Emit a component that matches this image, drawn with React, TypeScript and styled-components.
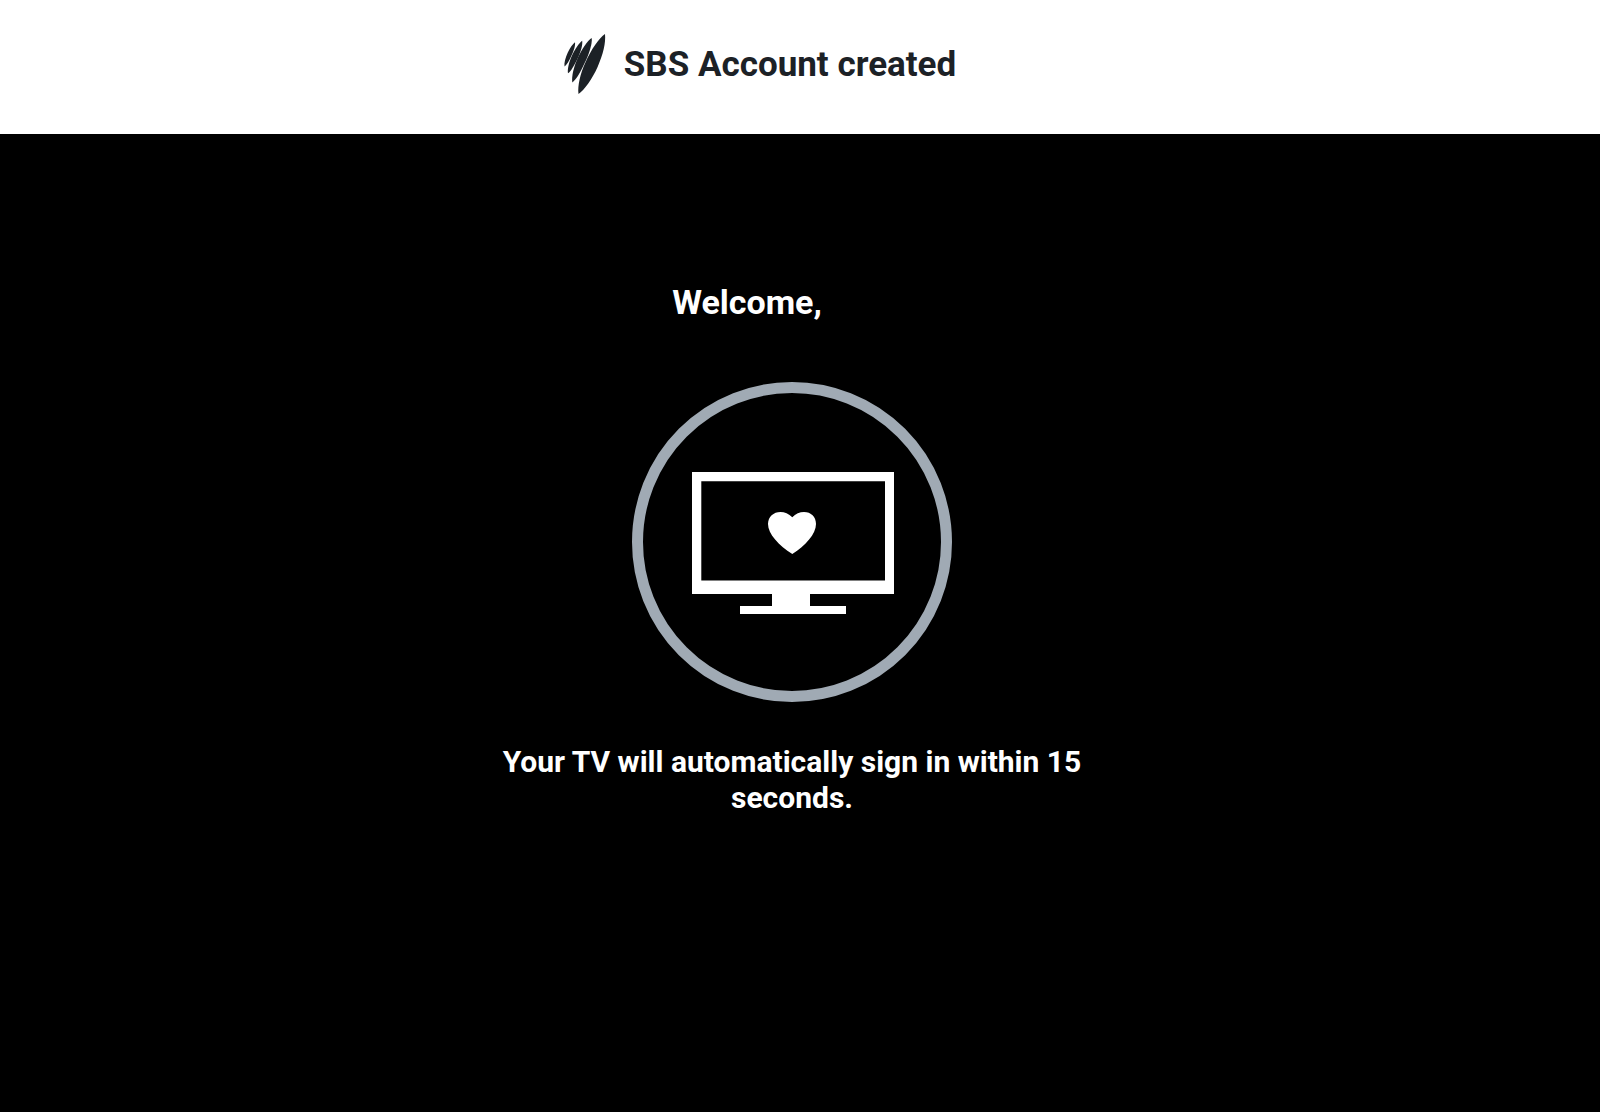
import React from "react";
import styled, { createGlobalStyle } from "styled-components";

const GlobalStyle = createGlobalStyle`
  *, *::before, *::after { box-sizing: border-box; }
  html, body { margin: 0; background: #000; }
  body {
    font-family: Roboto, "Liberation Sans", sans-serif;
    -webkit-font-smoothing: antialiased;
  }
`;

const Page = styled.div`
  display: flex;
  flex-direction: column;
  min-height: 100vh;
  background: #000;
`;

const Header = styled.header`
  display: flex;
  justify-content: center;
  align-items: center;
  gap: 18px;
  padding: 34px 80px 40px 0;
  background: #fff;
  color: #1c2126;
`;

const Logo = styled.svg`
  flex: none;
  width: 42px;
  height: 60px;
  fill: currentColor;
`;

const Title = styled.h1`
  margin: 0;
  padding-top: 2px;
  font-size: 35px;
  line-height: 42px;
  font-weight: 700;
`;

const Main = styled.main`
  display: flex;
  flex-direction: column;
  align-items: center;
  gap: 42px;
  padding: 148px 16px 48px 0;
  color: #fff;
`;

const Greeting = styled.h2`
  margin: 0;
  padding: 0 90px 18px 0;
  font-size: 34px;
  line-height: 40px;
  font-weight: 700;
`;

const Badge = styled.div`
  display: flex;
  justify-content: center;
  align-items: center;
  width: 320px;
  height: 320px;
  border: 11px solid #a0aab4;
  border-radius: 50%;
`;

const TvIcon = styled.svg`
  width: 204px;
  height: 144px;
  fill: currentColor;
`;

const Message = styled.p`
  max-width: 600px;
  margin: 0;
  font-size: 30px;
  line-height: 36px;
  font-weight: 700;
  text-align: center;
`;

export default function App() {
  return (
    <Page>
      <GlobalStyle />
      <Header>
        <Logo viewBox="0 0 42 60" role="img" aria-label="SBS">
          <path d="M11 8.300C11.500 11.500 9.900 16.800 7.200 22.300C5 27 2.500 31.200 .5 32.600C0 29 1.300 23.800 3.800 18.500C6 14 8.700 10 11 8.300Z" />
          <path d="M18.200 6.700C18.800 11 16.900 17.700 13.500 24.700C10.300 31.400 6.900 37.400 4 39.300C3.300 35 4.900 28.300 7.900 21.700C11 15.200 14.900 9.100 18.200 6.700Z" />
          <path d="M27.700 4C28.400 9.500 25.500 18.800 20.900 28.600C16.800 37.300 12.400 45.700 8.300 48.400C7.400 42.500 9.700 33.200 13.700 24.100C17.900 14.900 23.300 7 27.700 4Z" />
          <path d="M41 0C41.900 9 39.200 20.200 33.700 32.700C28 45.300 20.200 56.200 14.500 60C13.500 51.500 16.200 39.900 21.400 28.400C27.400 15.100 35.200 3.900 41 0Z" />
        </Logo>
        <Title>SBS Account created</Title>
      </Header>
      <Main>
        <Greeting>Welcome,</Greeting>
        <Badge>
          <TvIcon viewBox="0 -2 204 144" role="img" aria-label="Television connected">
            <path
              fillRule="evenodd"
              d="M2 0H204V122H120V134H156V142H50V134H82V122H2ZM11.300 9.300V108.500H195V9.300Z"
            />
            <path d="M102.300 45.200C98.800 41.800 94.500 40 90.500 40C83.500 40 78 44.800 78 52C78 62 89 73.500 102.300 82C115.500 73.500 126 62 126 52C126 44.800 121 40 114 40C109.800 40 105.500 41.800 102.300 45.200Z" />
          </TvIcon>
        </Badge>
        <Message>Your TV will automatically sign in within 15 seconds.</Message>
      </Main>
    </Page>
  );
}
